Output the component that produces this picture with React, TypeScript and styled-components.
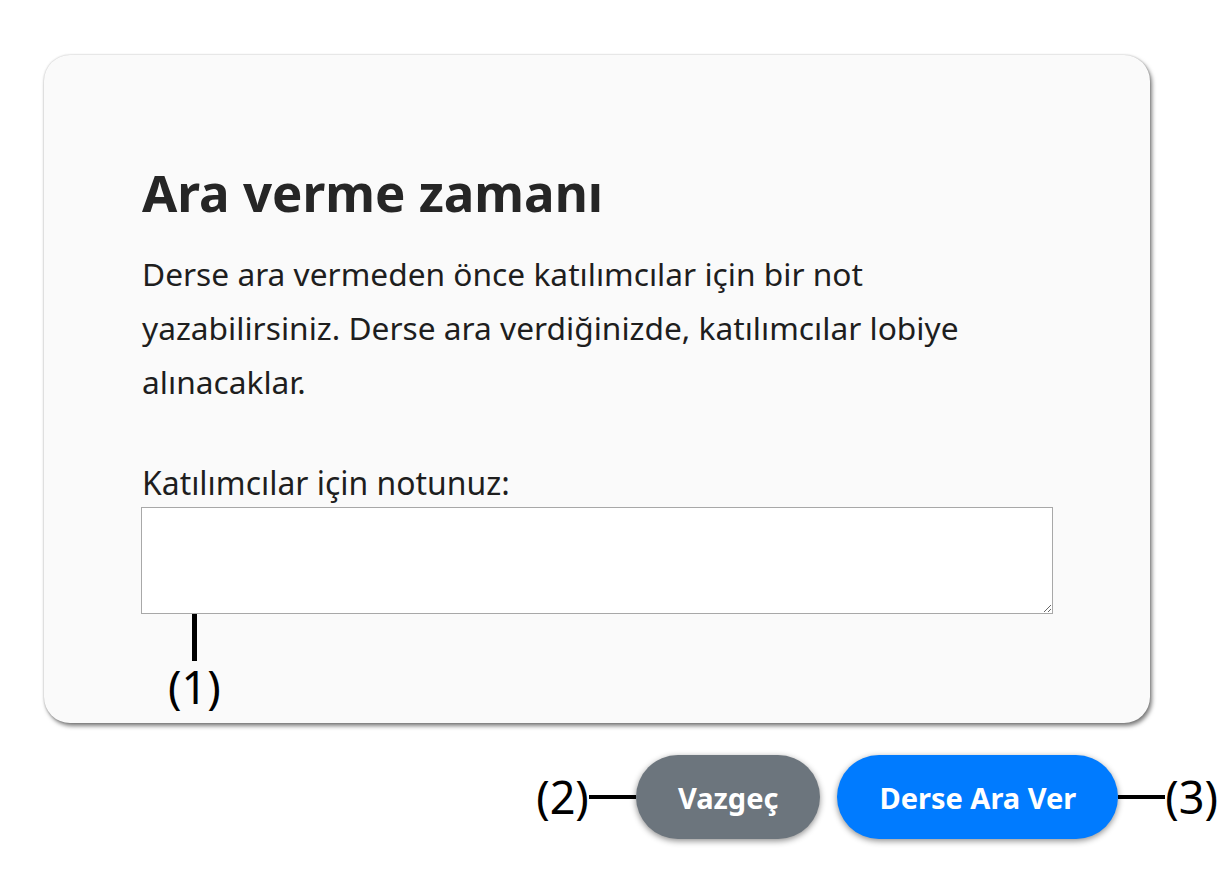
import styled, { createGlobalStyle } from 'styled-components';

const GlobalStyle = createGlobalStyle`
  html, body {
    margin: 0;
    padding: 0;
    background: #ffffff;
  }
  body {
    font-family: 'Noto Sans', 'Open Sans', sans-serif;
    color: #212121;
  }
`;

const Page = styled.div`
  width: 1232px;
  height: 869px;
  padding-top: 55px;
  box-sizing: border-box;
  overflow: hidden;
`;

const Card = styled.div`
  margin-left: 44px;
  width: 1106px;
  height: 668px;
  box-sizing: border-box;
  padding: 100px 97px 0 98px;
  background: #fafafa;
  border-radius: 26px;
  box-shadow: 2px 3px 4px rgba(0, 0, 0, 0.5), 0 0 2px rgba(0, 0, 0, 0.25);
  display: flex;
  flex-direction: column;
`;

const Title = styled.h1`
  margin: 0;
  font-size: 51px;
  line-height: 74px;
  font-weight: 700;
  color: #262626;
`;

const Text = styled.p`
  margin: 18px 0 0;
  font-size: 31.7px;
  line-height: 54px;
  color: #1e1e1e;
`;

const Label = styled.label`
  display: block;
  margin-top: 54px;
  font-size: 31.9px;
  line-height: 40px;
  color: #1e1e1e;
`;

const NoteInput = styled.textarea`
  display: block;
  width: 912px;
  height: 107px;
  margin: 4px 0 0 -1px;
  box-sizing: border-box;
  border: 1px solid #a8a8a8;
  border-radius: 0;
  background: #ffffff;
  resize: both;
  font-family: inherit;
  font-size: 20px;
  outline: none;
`;

const Callout = styled.div<{ $dir: 'column' | 'row' }>`
  display: flex;
  flex-direction: ${(p) => p.$dir};
  align-items: center;
`;

const CardCallout = styled(Callout)`
  align-self: flex-start;
  margin-left: 26px;
`;

const Tick = styled.div<{ $vertical?: boolean }>`
  background: #000000;
  width: ${(p) => (p.$vertical ? '5px' : '47px')};
  height: ${(p) => (p.$vertical ? '47px' : '4px')};
`;

const Mark = styled.span`
  font-size: 45px;
  line-height: 52px;
  color: #000000;
`;

const Actions = styled.div`
  display: flex;
  justify-content: flex-end;
  align-items: center;
  gap: 17px;
  margin-top: 32px;
  padding-right: 14px;
`;

const Button = styled.button<{ $variant: 'secondary' | 'primary' }>`
  height: 84px;
  padding: 0 42px;
  border: none;
  border-radius: 42px;
  font-family: inherit;
  font-size: 29px;
  font-weight: 700;
  color: #ffffff;
  background: ${(p) => (p.$variant === 'primary' ? '#007bff' : '#6c757d')};
  box-shadow: 0 2px 6px rgba(0, 0, 0, 0.45);
  cursor: pointer;
`;

export default function App() {
  return (
    <Page>
      <GlobalStyle />
      <Card>
        <Title>Ara verme zamanı</Title>
        <Text>
          Derse ara vermeden önce katılımcılar için bir not
          <br />
          yazabilirsiniz. Derse ara verdiğinizde, katılımcılar lobiye
          <br />
          alınacaklar.
        </Text>
        <Label htmlFor="note">Katılımcılar için notunuz:</Label>
        <NoteInput id="note" />
        <CardCallout $dir="column">
          <Tick $vertical />
          <Mark>(1)</Mark>
        </CardCallout>
      </Card>
      <Actions>
        <Callout $dir="row">
          <Mark>(2)</Mark>
          <Tick />
          <Button $variant="secondary">Vazgeç</Button>
        </Callout>
        <Callout $dir="row">
          <Button $variant="primary">Derse Ara Ver</Button>
          <Tick />
          <Mark>(3)</Mark>
        </Callout>
      </Actions>
    </Page>
  );
}
